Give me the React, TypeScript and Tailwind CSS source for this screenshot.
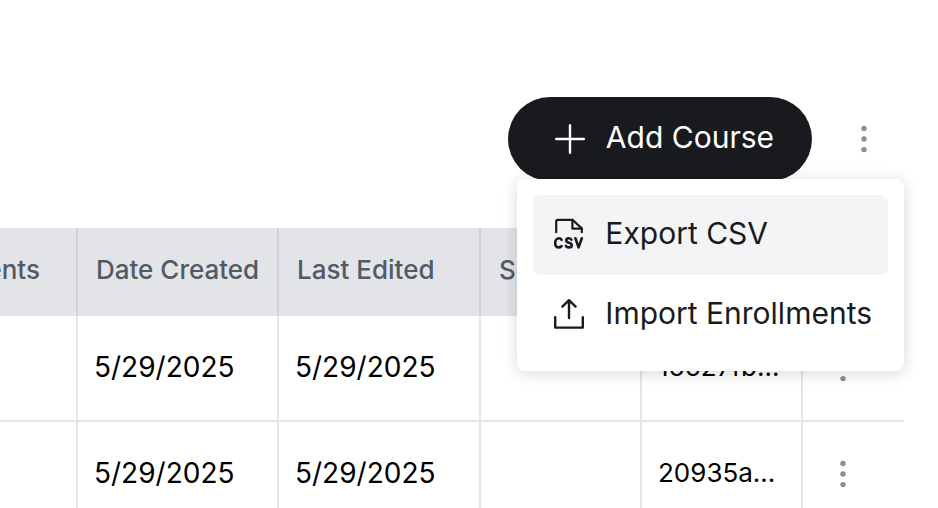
import React from 'react';

interface Course {
  created: string;
  edited: string;
  id: string;
}

const courses: Course[] = [
  { created: '5/29/2025', edited: '5/29/2025', id: '16627fb...' },
  { created: '5/29/2025', edited: '5/29/2025', id: '20935a...' },
];

const KebabIcon = () => (
  <svg width="8" height="28" viewBox="0 0 8 28" fill="#8e8e8e" aria-hidden="true">
    <circle cx="4" cy="3.4" r="2.7" />
    <circle cx="4" cy="14" r="2.7" />
    <circle cx="4" cy="24.6" r="2.7" />
  </svg>
);

const PlusIcon = () => (
  <svg width="32" height="32" viewBox="0 0 32 32" fill="none" stroke="currentColor" strokeWidth="2.4" strokeLinecap="round" aria-hidden="true">
    <path d="M16 2.2v27.6M2.2 16h27.6" />
  </svg>
);

const CsvIcon = () => (
  <svg width="32" height="32" viewBox="0 0 32 32" fill="none" stroke="currentColor" strokeWidth="2.2" strokeLinecap="round" strokeLinejoin="round" aria-hidden="true">
    <path d="M3.2 15.2V4.4Q3.2 2.8 4.8 2.8H19.4L28.8 11.4V15.2" />
    <path d="M19.4 2.8V11.6H28.8" />
    <path d="M8.6 22.8C8 21.8 7.2 21.3 6 21.3C3.8 21.3 2.2 23 2.2 25.9S3.8 30.4 6 30.4C7.2 30.4 8 30 8.6 29" strokeWidth="2.6" />
    <path d="M18.4 22.6C17.8 21.7 16.9 21.3 15.8 21.3C14.3 21.3 13.3 22.1 13.3 23.4C13.3 26.4 18.8 25.2 18.8 28.2C18.8 29.6 17.6 30.4 16 30.4C14.6 30.4 13.4 30 12.8 28.8" strokeWidth="2.6" />
    <path d="M22.4 21.3L25.6 30.4L28.8 21.3" strokeWidth="2.6" />
  </svg>
);

const UploadIcon = () => (
  <svg width="32" height="32" viewBox="0 0 32 32" fill="none" stroke="currentColor" strokeWidth="2.4" strokeLinecap="round" strokeLinejoin="round" aria-hidden="true">
    <path d="M2.2 20.2V30.6H29.8V20.2" />
    <path d="M16 21V3.4M9.4 9.6L16 3.2L22.6 9.6" />
  </svg>
);

const headCell = 'h-[88px] border-r-2 border-b-2 border-r-[#cfd2d6] border-b-[#e3e4e8] bg-[#e3e4e8] pb-0.5 pl-[18px] text-left font-medium whitespace-nowrap text-[#525b63]';
const bodyCell = 'h-[106px] border-r-2 border-b-2 border-[#e3e3e8] pb-0.5 pl-4 whitespace-nowrap';

const CourseTable: React.FC = () => (
  <table className="w-full table-fixed border-separate border-spacing-0 text-[26px] leading-8">
    <colgroup>
      <col />
      <col className="w-[201px]" />
      <col className="w-[202px]" />
      <col className="w-[161px]" />
      <col className="w-[161px]" />
      <col className="w-[101px]" />
    </colgroup>
    <thead>
      <tr>
        <th scope="col" className={headCell}>
          <div className="flex justify-end pr-9">Enrollments</div>
        </th>
        <th scope="col" className={headCell}>Date Created</th>
        <th scope="col" className={headCell}>Last Edited</th>
        <th scope="col" className={headCell}>Section</th>
        <th scope="col" className={headCell}>ID</th>
        <th scope="col" className="border-b-2 border-[#e3e4e8] bg-[#e3e4e8]" />
      </tr>
    </thead>
    <tbody>
      {courses.map((course) => (
        <tr key={course.id} className="text-black">
          <td className={bodyCell} />
          <td className={bodyCell}>
            <span className="text-[28px]">{course.created}</span>
          </td>
          <td className={bodyCell}>
            <span className="text-[28px]">{course.edited}</span>
          </td>
          <td className={bodyCell} />
          <td className={bodyCell}>{course.id}</td>
          <td className="border-b-2 border-[#e3e3e8]">
            <button type="button" aria-label="Course actions" className="flex h-20 w-20 items-center justify-center">
              <KebabIcon />
            </button>
          </td>
        </tr>
      ))}
    </tbody>
  </table>
);

const ActionsMenu: React.FC = () => (
  <div role="menu" className="absolute top-[82px] right-0 z-10 flex flex-col rounded-lg bg-white p-4 text-[30px] leading-10 text-[#191a1d] shadow-[0_2px_16px_rgba(0,0,0,0.16)]">
    <button type="button" role="menuitem" className="flex h-20 items-center gap-5 rounded-lg bg-[#f3f4f6] pr-4 pb-1 pl-5">
      <CsvIcon />
      <span>Export CSV</span>
    </button>
    <button type="button" role="menuitem" className="flex h-20 items-center gap-5 rounded-lg pr-4 pb-1 pl-5">
      <UploadIcon />
      <span>Import Enrollments</span>
    </button>
  </div>
);

const App: React.FC = () => (
  <main className="h-screen overflow-hidden bg-white pt-[97px] pr-[34px] font-['Inter',sans-serif]">
    <div className="relative mb-[47px] flex items-center justify-end gap-3">
      <button type="button" className="flex h-[84px] items-center gap-5 rounded-full bg-[#191a1d] pr-[38px] pl-[46px] text-[30px] leading-10 text-white">
        <PlusIcon />
        <span className="pb-1">Add Course</span>
      </button>
      <button type="button" aria-label="More actions" className="flex h-20 w-20 items-center justify-center">
        <KebabIcon />
      </button>
      <ActionsMenu />
    </div>
    <CourseTable />
  </main>
);

export default App;
